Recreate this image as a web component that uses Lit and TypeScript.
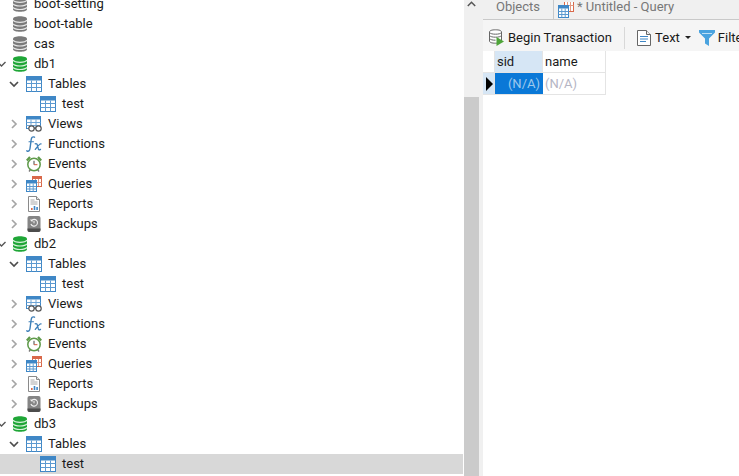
import { LitElement, html, css, svg } from "lit";
import { customElement } from "lit/decorators.js";

const dbIcon = (c: string, d: string) => svg`<svg class="ic" width="16" height="16" viewBox="0 0 16 16">
  <path d="M1 3C1 1.200 4 .2 8 .2s7 1 7 2.800v10c0 1.800-3 2.800-7 2.800s-7-1-7-2.800z" fill="${c}"/>
  <path d="M1 4.200c1 1.500 3.800 2.100 7 2.100s6-.6 7-2.100M1 7.900c1 1.500 3.800 2.100 7 2.100s6-.6 7-2.100M1 11.400c1 1.500 3.800 2.100 7 2.100s6-.6 7-2.100" fill="none" stroke="${d}" stroke-width="1.200"/>
</svg>`;

const tableIcon = svg`<svg class="ic" width="16" height="16" viewBox="0 0 16 16">
  <rect x=".5" y=".5" width="15" height="15" fill="#fff" stroke="#3f87c6"/>
  <rect x="0" y="0" width="16" height="4.500" rx="1" fill="#3f87c6"/>
  <path d="M.5 7.500h15M.5 11.500h15M5.500 4.500v11M10.500 4.500v11" stroke="#5d9ad0" fill="none"/>
</svg>`;

const viewsIcon = svg`<svg class="ic" width="17" height="16" viewBox="0 0 17 16">
  <rect x=".5" y=".5" width="14" height="12" fill="#fff" stroke="#3f87c6"/>
  <rect x="0" y="0" width="15" height="3.500" fill="#3f87c6"/>
  <path d="M.5 6.500h14M.5 9.500h14M5 3.500v9M10 3.500v9" stroke="#6fa5d6" fill="none"/>
  <circle cx="5.500" cy="12.500" r="2.700" fill="#fff" stroke="#555" stroke-width="1.200"/>
  <circle cx="12.500" cy="12.500" r="2.700" fill="#fff" stroke="#555" stroke-width="1.200"/>
  <path d="M8 12h2" stroke="#555"/>
</svg>`;

const fxIcon = svg`<svg class="ic" width="17" height="16" viewBox="0 0 17 16" fill="none" stroke="#3d7fb8" stroke-linecap="round">
  <path d="M8.500 1.200C6.500 .2 5.500 1.400 5.200 3.500L4 12.500C3.700 14.800 2.500 15.800 .8 14.800" stroke-width="1.400"/>
  <path d="M3 5.800h4.500" stroke-width="1.100"/>
  <path d="M9.200 7.800c1.500-.6 2 .3 2.300 1.700l.8 3.300c.3 1.200 1 1.400 2.200.6M15 7.800c-1.300-.3-2.500 1.300-5.700 5.600" stroke-width="1.300"/>
</svg>`;

const clockIcon = svg`<svg class="ic" width="16" height="16" viewBox="0 0 16 16">
  <path d="M.8 4.500L4 1M15.200 4.500L12 1" stroke="#5f9a4a" stroke-width="2.200" fill="none"/>
  <path d="M3 15.500l1.500-2M13 15.500l-1.500-2" stroke="#777" stroke-width="1.300"/>
  <circle cx="8" cy="8.500" r="6.200" fill="#fff" stroke="#5f9a4a" stroke-width="1.500"/>
  <path d="M8 4.800v3.900" stroke="#444" stroke-width="1"/>
  <path d="M8 8.700h3.400" stroke="#d2583c" stroke-width="1"/>
</svg>`;

const queryIcon = svg`<svg class="ic" width="16" height="16" viewBox="0 0 16 16">
  <rect x="6.500" y=".5" width="9" height="10" fill="#fff" stroke="#d9694a"/>
  <rect x="6" y="0" width="10" height="3" fill="#d9694a"/>
  <path d="M9.500 3v7M12.500 3v7M6.500 6.500h9" stroke="#e29a82"/>
  <rect x=".5" y="4.500" width="10" height="11" fill="#fff" stroke="#3f87c6"/>
  <rect x="0" y="4" width="11" height="3.500" fill="#3f87c6"/>
  <path d="M.5 10.500h10M.5 13h10M3.800 7.500v8M7.200 7.500v8" stroke="#5d9ad0"/>
</svg>`;

const reportIcon = svg`<svg class="ic" width="16" height="16" viewBox="0 0 16 16">
  <path d="M2.500 .5h8l3 3v12h-11z" fill="#fff" stroke="#8a8a8a"/>
  <path d="M10.500 .5v3h3" fill="#e4e4e4" stroke="#8a8a8a"/>
  <path d="M4.500 4h4M4.500 6h7M4.500 8h7" stroke="#a8a8a8"/>
  <rect x="5" y="12" width="1.600" height="2" fill="#d9694a"/>
  <rect x="7.700" y="10" width="1.600" height="4" fill="#3f87c6"/>
  <rect x="10.300" y="11" width="1.600" height="3" fill="#3f87c6"/>
</svg>`;

const backupIcon = svg`<svg class="ic" width="16" height="16" viewBox="0 0 16 16">
  <rect x="1.500" y="0" width="13" height="16" rx="2" fill="#858585"/>
  <path d="M1.500 12.500h13V14a2 2 0 0 1-2 2h-9a2 2 0 0 1-2-2z" fill="#4c4c4c"/>
  <path d="M5.400 4.600A3.400 3.400 0 1 1 4.900 8" fill="none" stroke="#f2f2f2" stroke-width="1.100"/>
  <path d="M3.800 3.600l2.800.2-.3 2.500z" fill="#f2f2f2"/>
  <path d="M8 4.800v2.500" stroke="#f2f2f2"/>
</svg>`;

const chevronDown = svg`<svg width="10" height="7" viewBox="0 0 10 7"><path d="M1 1l4 4 4-4" fill="none" stroke="#4d4d4d" stroke-width="1.700"/></svg>`;
const chevronRight = svg`<svg width="7" height="10" viewBox="0 0 7 10"><path d="M1 1l4 4-4 4" fill="none" stroke="#a6a6a6" stroke-width="1.700"/></svg>`;
const dbCheck = svg`<svg width="6" height="7" viewBox="0 0 6 7"><path d="M-1 2.500l2.500 2.500L5.500 1" fill="none" stroke="#555" stroke-width="1.400"/></svg>`;
const chevronUp = svg`<svg width="9" height="6" viewBox="0 0 9 6"><path d="M.8 5l3.700-3.700L8.200 5" fill="none" stroke="#555" stroke-width="1.500"/></svg>`;

const beginIcon = svg`<svg width="17" height="17" viewBox="0 0 17 17">
  <path d="M1.500 3C1.500 1.500 4 .8 7.500 .8s6 .7 6 2.200v9c0 1.500-2.500 2.200-6 2.200s-6-.7-6-2.200z" fill="#fff" stroke="#666"/>
  <path d="M1.500 3.500c1 1.200 3 1.700 6 1.700s5-.5 6-1.700M1.500 6.500c1 1.200 3 1.700 6 1.700s5-.5 6-1.700M1.500 9.500c1 1.200 3 1.700 6 1.700" fill="none" stroke="#666"/>
  <path d="M8.500 8l7.500 4.500L8.500 17z" fill="#4fa53a"/>
</svg>`;
const textIcon = svg`<svg width="14" height="16" viewBox="0 0 14 16">
  <path d="M.5 .5h9l4 4v11H.5z" fill="#fff" stroke="#666"/>
  <path d="M9.500 .5v4h4" fill="#eee" stroke="#666"/>
  <path d="M3 6.500h8M3 9h8M3 11.500h6" stroke="#3f87c6"/>
</svg>`;
const filterIcon = svg`<svg width="16" height="16" viewBox="0 0 16 16">
  <path d="M0 0h16v2.500L10 8.500V16L6 13.500V8.500L0 2.500z" fill="#4aa3df"/>
  <path d="M3 3.500h10" stroke="#bfe0f5"/>
</svg>`;
const tabIcon = svg`<svg width="16" height="16" viewBox="0 0 16 16">
  <rect x="6.500" y="-2.500" width="9" height="12" fill="#fff" stroke="#d9694a"/>
  <path d="M9.500 -2v11M12.500 -2v11M6.500 3.500h9" stroke="#e29a82"/>
  <rect x=".5" y="3.500" width="10" height="12" fill="#fff" stroke="#3f87c6"/>
  <rect x="0" y="3" width="11" height="3.500" fill="#3f87c6"/>
  <path d="M.5 9.500h10M.5 12.500h10M3.800 6.500v9M7.200 6.500v9" stroke="#5d9ad0"/>
</svg>`;

type Row = { label: string; depth: 0 | 1 | 2; icon: unknown; arrow?: "down" | "right" | "check"; selected?: boolean };

const dbGroup = (name: string, selected = false): Row[] => [
  { label: name, depth: 0, icon: dbIcon("#1fa637", "#d7f0da"), arrow: "check" },
  { label: "Tables", depth: 1, icon: tableIcon, arrow: "down" },
  { label: "test", depth: 2, icon: tableIcon, selected },
];
const rest: Row[] = [
  { label: "Views", depth: 1, icon: viewsIcon, arrow: "right" },
  { label: "Functions", depth: 1, icon: fxIcon, arrow: "right" },
  { label: "Events", depth: 1, icon: clockIcon, arrow: "right" },
  { label: "Queries", depth: 1, icon: queryIcon, arrow: "right" },
  { label: "Reports", depth: 1, icon: reportIcon, arrow: "right" },
  { label: "Backups", depth: 1, icon: backupIcon, arrow: "right" },
];
const grey = dbIcon("#7b7b7b", "#e6e6e6");
const rows: Row[] = [
  { label: "boot-setting", depth: 0, icon: grey },
  { label: "boot-table", depth: 0, icon: grey },
  { label: "cas", depth: 0, icon: grey },
  ...dbGroup("db1"), ...rest,
  ...dbGroup("db2"), ...rest,
  ...dbGroup("db3", true),
];

@customElement("app-root")
export class AppRoot extends LitElement {
  static styles = css`
    :host {
      display: flex;
      width: 739px;
      height: 476px;
      overflow: hidden;
      background: #fff;
      font-family: Roboto, sans-serif;
      font-size: 13px;
      color: #1a1a1a;
    }
    .tree { width: 464px; flex: none; overflow: hidden; }
    .list { margin-top: -6px; margin-right: 1px; }
    .row { height: 20px; display: flex; align-items: center; position: relative; white-space: nowrap; }
    .row.selected { background: #d8d8d8; }
    .lbl { position: relative; top: -1px; }
    .arrow { width: 12px; height: 20px; display: flex; align-items: center; justify-content: center; flex: none; }
    .d0 { padding-left: 12px; }
    .d1 { padding-left: 8px; }
    .d2 { padding-left: 40px; }
    .d0 .arrow { position: absolute; left: 0; top: 0; width: 6px; }
    .d1 .arrow { margin-right: 6px; }
    .ic { flex: none; display: block; }
    .icw { width: 16px; height: 16px; flex: none; margin-right: 6px; display: block; }
    .scroll { width: 19px; flex: none; background: #f0f0f0; position: relative; }
    .up { display: flex; width: 15px; justify-content: center; padding-top: 1px; }
    .thumb { position: absolute; left: 0; top: 97px; bottom: 0; width: 15px; background: #cbcbcb; }
    .main { flex: 1; min-width: 0; display: flex; flex-direction: column; }
    .tabs { height: 19px; flex: none; background: #f0f0f0; border-bottom: 1px solid #c9c9c9; display: flex; align-items: flex-start; color: #777; overflow: hidden; }
    .tab { padding: 0 13px; height: 19px; line-height: 13px; display: flex; align-items: center; flex: none; position: relative; top: -3px; }
    .tab.q { padding: 0 0 0 4px; gap: 3px; top: 0; height: 19px; border-left: 1px solid #c9c9c9; }
    .tab.q span { position: relative; top: -3px; }
    .tools { height: 31px; flex: none; background: #f5f5f5; display: flex; align-items: center; padding: 4px 0 0 5px; box-sizing: border-box; white-space: nowrap; overflow: hidden; }
    .tool { display: flex; align-items: center; gap: 3px; flex: none; }
    .tool.txt { padding-left: 2px; gap: 1px; }
    .sep { width: 1px; height: 22px; background: #d8d8d8; margin: 0 10px 0 12px; flex: none; }
    .caret { width: 0; height: 0; border-left: 3px solid transparent; border-right: 3px solid transparent; border-top: 3px solid #222; margin: 0 8px 0 4px; }
    .grid { display: grid; grid-template-columns: 12px 48px 63px; grid-template-rows: 22px 22px; width: 123px; }
    .cell { display: flex; align-items: center; box-sizing: border-box; border-right: 1px solid #e4e4e4; border-bottom: 1px solid #e4e4e4; padding: 0 2px; }
    .hd { background: #fff; }
    .hd.on { background: #d6e6f5; }
    .mark { background: #d6e6f5; padding: 0; }
    .mark i { display: block; border-left: 7px solid #000; border-top: 7px solid transparent; border-bottom: 7px solid transparent; margin-left: 3px; }
    .val { color: #b5b5c4; }
    .val.on { background: #0a78d7; color: #9ec8ec; justify-content: flex-end; padding-right: 3px; border-right: 0; }
  `;

  render() {
    return html`
      <div class="tree"><div class="list">
        ${rows.map(
          (r) => html`<div class="row d${r.depth} ${r.selected ? "selected" : ""}">
            ${r.arrow
              ? html`<span class="arrow">${r.arrow === "down" ? chevronDown : r.arrow === "right" ? chevronRight : dbCheck}</span>`
              : ""}
            <span class="icw">${r.icon}</span><span class="lbl">${r.label}</span>
          </div>`
        )}
      </div></div>
      <div class="scroll"><div class="up">${chevronUp}</div><div class="thumb"></div></div>
      <div class="main">
        <div class="tabs">
          <div class="tab">Objects</div>
          <div class="tab q">${tabIcon}<span>* Untitled - Query</span></div>
        </div>
        <div class="tools">
          <div class="tool">${beginIcon}<span>Begin Transaction</span></div>
          <div class="sep"></div>
          <div class="tool txt">${textIcon}<span>&nbsp;Text</span><i class="caret"></i></div>
          <div class="tool">${filterIcon}<span>Filter</span></div>
        </div>
        <div class="grid">
          <div class="cell hd"></div><div class="cell hd on">sid</div><div class="cell hd">name</div>
          <div class="cell mark"><i></i></div><div class="cell val on">(N/A)</div><div class="cell val">(N/A)</div>
        </div>
      </div>
    `;
  }
}
